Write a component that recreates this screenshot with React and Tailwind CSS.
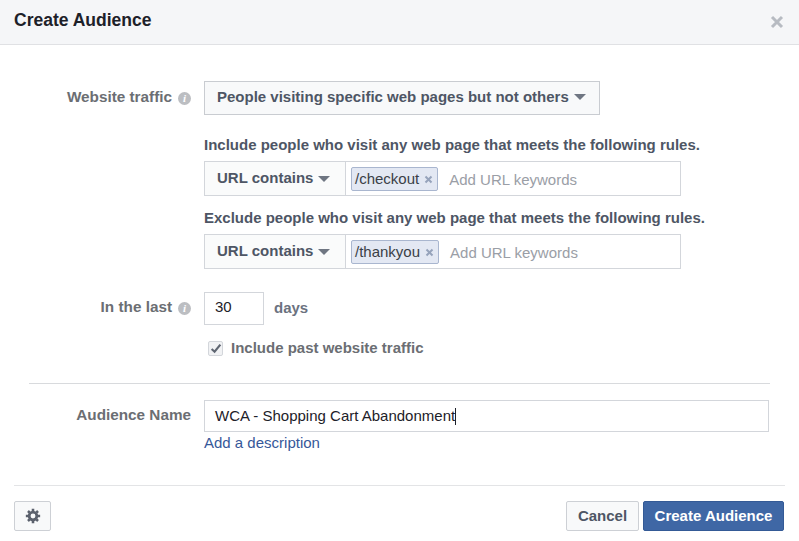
function Caret() {
  return <span className="ml-[5px] inline-block w-0 h-0 border-x-[6px] border-x-transparent border-t-[6px] border-t-[#6f7682]" />;
}

function Info() {
  return (
    <span className="w-[13px] h-[13px] rounded-full bg-[#bcbec2] flex items-center justify-center text-[11px] italic font-bold text-white font-['Liberation_Serif',serif] leading-none">
      i
    </span>
  );
}

function Label({ children, info }) {
  return (
    <div className="w-[204px] shrink-0 flex justify-end items-center gap-[6px] pr-[13px] text-[15.3px] font-bold text-[#6b6e73]">
      <span className="-mt-[2px]">{children}</span>
      {info && <Info />}
    </div>
  );
}

function Token({ children }) {
  return (
    <span className="h-[24px] flex items-center pl-[3px] pr-[4px] bg-[#e3e8f3] border border-[#a9b6cf] rounded-[2px] text-[15px] text-[#3a3f47]">
      <span className="mt-[2px]">{children}</span>
      <svg className="ml-[5px] mt-[2px]" width="9" height="9" viewBox="0 0 9 9">
        <path d="M1.5 1.5 L7.5 7.5 M7.5 1.5 L1.5 7.5" stroke="#96a3bb" strokeWidth="2" />
      </svg>
    </span>
  );
}

function UrlRow({ token }) {
  return (
    <div className="w-[477px] h-[35px] flex border border-[#d3d6db] bg-white">
      <div className="w-[141px] shrink-0 flex items-center pl-[12px] border-r border-[#d3d6db] bg-[#fafbfb] text-[15px] font-bold text-[#4e5665]">
        URL contains
        <Caret />
      </div>
      <div className="flex items-center pl-[5px]">
        <Token>{token}</Token>
        <span className="ml-[11px] mt-[4px] text-[15px] text-[#9a9ea6]">Add URL keywords</span>
      </div>
    </div>
  );
}

export default function App() {
  return (
    <div className="w-[799px] h-[541px] bg-white font-['Liberation_Sans',Arial,sans-serif] overflow-hidden">
      <div className="h-[45px] flex items-center justify-between pl-[14px] pr-[15px] bg-[#f5f6f8] border-b border-[#e0e1e4]">
        <h1 className="mb-[3px] text-[17.5px] font-bold text-[#1d2129]">Create Audience</h1>
        <svg width="14" height="14" viewBox="0 0 14 14">
          <path d="M2 2 L12 12 M12 2 L2 12" stroke="#b7bbc2" strokeWidth="3" />
        </svg>
      </div>

      <div className="mt-[36px] h-[34px] flex items-center">
        <Label info>Website traffic</Label>
        <div className="w-[396px] h-[34px] flex items-center pl-[12px] pb-[2px] bg-[#f8f9fa] border border-[#c9ccd1] text-[15px] font-bold text-[#4e5665]">
          People visiting specific web pages but not others
          <Caret />
        </div>
      </div>

      <div className="ml-[204px]">
        <p className="mt-[21px] h-[18px] leading-[18px] text-[15px] font-bold text-[#4e5665]">Include people who visit any web page that meets the following rules.</p>
        <div className="mt-[7px]"><UrlRow token="/checkout" /></div>
        <p className="mt-[13px] h-[18px] leading-[18px] text-[15px] font-bold text-[#4e5665]">Exclude people who visit any web page that meets the following rules.</p>
        <div className="mt-[7px]"><UrlRow token="/thankyou" /></div>
      </div>

      <div className="mt-[23px] h-[33px] flex items-center">
        <Label info>In the last</Label>
        <div className="w-[60px] h-[33px] flex items-center pl-[10px] pb-[2px] border border-[#d3d6db] text-[15px] text-[#1d2129]">30</div>
        <span className="ml-[10px] text-[15px] font-bold text-[#6b7280]">days</span>
      </div>

      <div className="mt-[14px] ml-[208px] flex items-center h-[18px]">
        <span className="w-[15px] h-[15px] flex items-center justify-center bg-[#f1f2f4] border border-[#d3d6db] rounded-[2px]">
          <svg width="12" height="11" viewBox="0 0 11 10">
            <path d="M1.5 5.5 L4.2 8 L9.5 1.5" fill="none" stroke="#5f6672" strokeWidth="2" />
          </svg>
        </span>
        <span className="ml-[8px] text-[15px] font-bold text-[#6b6e73]">Include past website traffic</span>
      </div>

      <div className="mt-[26px] mx-[29px] border-t border-[#d8dadd]" />

      <div className="mt-[16px] h-[32px] flex items-center">
        <Label>Audience Name</Label>
        <div className="w-[565px] h-[32px] flex items-center pl-[10px] border border-[#d3d6db] text-[15px] text-[#1d2129]">
          WCA - Shopping Cart Abandonment
          <span className="w-px h-[17px] bg-[#1d2129]" />
        </div>
      </div>
      <div className="ml-[204px] mt-[2px] h-[18px] leading-[18px] text-[15px] text-[#365899]">Add a description</div>

      <div className="mt-[33px] mx-[14px] border-t border-[#e3e4e6]" />

      <div className="mt-[15px] ml-[14px] mr-[15px] flex items-center justify-between">
        <button className="w-[37px] h-[30px] flex items-center justify-center bg-[#f8f9fa] border border-[#cdd0d5] rounded-[2px]">
          <svg width="16" height="16" viewBox="0 0 15 15">
            <circle cx="7.5" cy="7.5" r="3.6" fill="none" stroke="#5b616d" strokeWidth="2.6" />
            <path d="M7.5 0.8 V3 M7.5 12 V14.2 M0.8 7.5 H3 M12 7.5 H14.2 M2.8 2.8 L4.3 4.3 M10.7 10.7 L12.2 12.2 M12.2 2.8 L10.7 4.3 M4.3 10.7 L2.8 12.2" stroke="#5b616d" strokeWidth="2.4" />
          </svg>
        </button>
        <div className="flex gap-[4px]">
          <button className="w-[73px] h-[30px] bg-[#f8f9fa] border border-[#cdd0d5] rounded-[2px] text-[15px] font-bold text-[#4e5665]">Cancel</button>
          <button className="w-[141px] h-[30px] bg-[#3f67a5] border border-[#345a96] rounded-[2px] text-[15px] font-bold text-white">Create Audience</button>
        </div>
      </div>
    </div>
  );
}
